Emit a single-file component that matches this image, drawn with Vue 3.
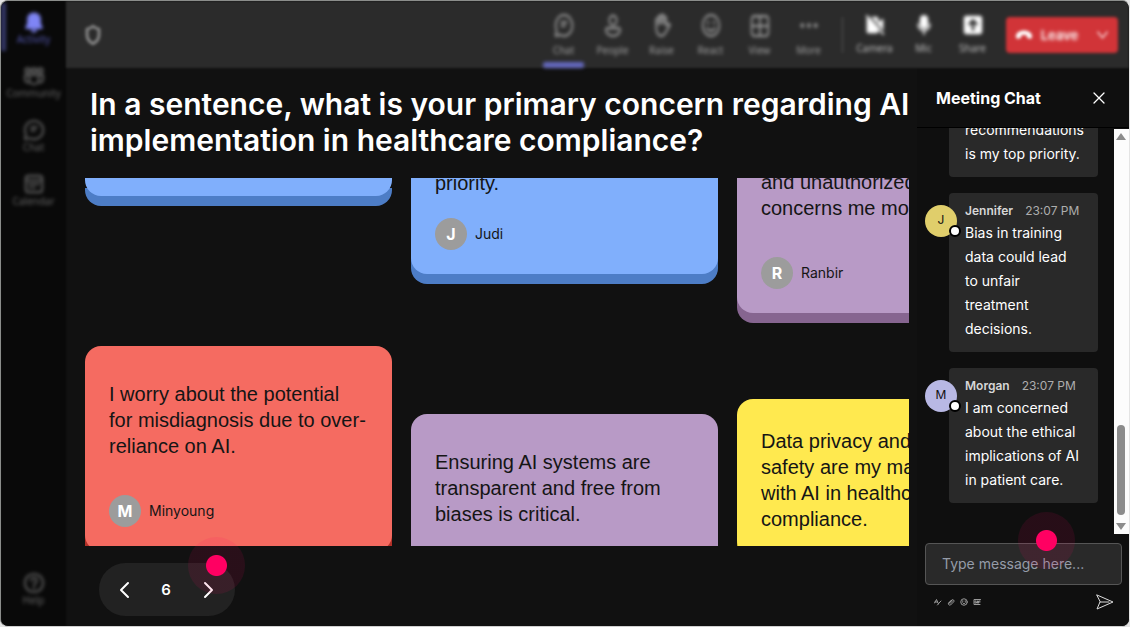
<script setup>
const nav = [
  { label: 'Activity', icon: 'bell', active: true },
  { label: 'Community', icon: 'community' },
  { label: 'Chat', icon: 'chat' },
  { label: 'Calendar', icon: 'calendar' },
]

const tools = [
  { label: 'Chat', icon: 'chat', active: true },
  { label: 'People', icon: 'person' },
  { label: 'Raise', icon: 'hand' },
  { label: 'React', icon: 'smile' },
  { label: 'View', icon: 'grid' },
  { label: 'More', icon: 'more' },
]

const devices = [
  { label: 'Camera', icon: 'camera' },
  { label: 'Mic', icon: 'mic' },
  { label: 'Share', icon: 'share' },
]

const columns = [
  {
    name: 'first',
    cards: [
      { tone: 'blue', size: 'tail' },
      {
        tone: 'red',
        lines: ['I worry about the potential', 'for misdiagnosis due to over-', 'reliance on AI.'],
        author: 'Minyoung',
      },
    ],
  },
  {
    name: 'second',
    cards: [
      { tone: 'blue', size: 'short', lines: ['priority.'], author: 'Judi' },
      {
        tone: 'purple',
        size: 'open',
        lines: ['Ensuring AI systems are', 'transparent and free from', 'biases is critical.'],
      },
    ],
  },
  {
    name: 'third',
    cards: [
      { tone: 'purple', size: 'cut', lines: ['and unauthorized', 'concerns me most.'], author: 'Ranbir' },
      {
        tone: 'yellow',
        size: 'long',
        lines: ['Data privacy and', 'safety are my main', 'with AI in healthcare', 'compliance.'],
      },
    ],
  },
]

const messages = [
  { lines: ['recommendations', 'is my top priority.'] },
  {
    author: 'Jennifer',
    time: '23:07 PM',
    tone: 'sand',
    lines: ['Bias in training', 'data could lead', 'to unfair', 'treatment', 'decisions.'],
  },
  {
    author: 'Morgan',
    time: '23:07 PM',
    tone: 'lilac',
    lines: ['I am concerned', 'about the ethical', 'implications of AI', 'in patient care.'],
  },
]

const icons = {
  bell: '<path fill="currentColor" stroke="none" d="M12 1.5c-4.600 0-7.500 3.400-7.500 7.600v4.400L2.500 18c-.3.800.2 1.500 1 1.500h17c.8 0 1.300-.7 1-1.500l-2-4.500V9.100c0-4.200-2.900-7.600-7.500-7.600zM8.500 20.500a3.500 3 0 0 0 7 0z"/>',
  community: '<circle cx="5" cy="6" r="2.500"/><circle cx="12" cy="6" r="2.500"/><circle cx="19" cy="6" r="2.500"/><path d="M7 11h10v5a5 5 0 0 1-10 0zM7 11H2v4a4 4 0 0 0 5 4M17 11h5v4a4 4 0 0 1-5 4"/>',
  chat: '<path d="M12 2a10 10 0 1 1-4.700 18.800L2 22l1.200-5.300A10 10 0 0 1 12 2z"/><path d="M9 9h6M9 12.500h4"/>',
  calendar: '<rect x="3" y="3" width="18" height="18" rx="3"/><path d="M3 8h18M7 12h2M11 12h2M15 12h2M7 16h2M11 16h2"/>',
  help: '<circle cx="12" cy="12" r="10"/><path d="M9 9.500a3 3 0 1 1 4.500 2.600c-1 .6-1.500 1.200-1.500 2.200M12 16.500v1.500"/>',
  shield: '<path stroke-width="3" d="M12 2.500c2.500 2 4.500 2.800 6.500 3V12c0 4.500-2.500 7.500-6.500 9.500C8 19.500 5.500 16.500 5.500 12V5.500c2-.2 4-1 6.500-3z"/>',
  person: '<circle cx="12" cy="7" r="4.500"/><path d="M5 14.500h14a1.500 1.500 0 0 1 1.500 1.500c0 3.500-4 6-8.500 6s-8.500-2.500-8.500-6A1.500 1.500 0 0 1 5 14.500z"/>',
  hand: '<path d="M5 13V6.500a1.500 1.500 0 0 1 3 0V4a1.500 1.500 0 0 1 3 0V3a1.500 1.500 0 0 1 3 0v2a1.500 1.500 0 0 1 3 0v7l2.500-1.500c1.500-.5 2.500.8 1.500 2L16 19c-1.200 2-2.800 3-5 3-4 0-6-3-6-9zM8 6v5M11 4v6M14 4v6"/>',
  smile: '<circle cx="12" cy="12" r="10"/><path d="M7.500 14.500c2 3.500 7 3.500 9 0M8.500 8.500v1.500M15.500 8.500v1.500"/>',
  grid: '<rect x="2" y="3" width="20" height="19" rx="3"/><path d="M12 3v19M2 12.500h20"/>',
  more: '<g fill="currentColor" stroke="none"><circle cx="4" cy="12" r="2.200"/><circle cx="12" cy="12" r="2.200"/><circle cx="20" cy="12" r="2.200"/></g>',
  camera: '<path fill="currentColor" stroke="none" d="M4 3h10a2 2 0 0 1 2 2v4l6-4v15l-6-4v3a2 2 0 0 1-2 2H4a2 2 0 0 1-2-2V5a2 2 0 0 1 2-2z"/><path stroke="#2b2b2b" d="M4 1l19 20"/><path d="M2 2l20 20"/>',
  mic: '<rect x="7" y="1" width="10" height="15" rx="5" fill="currentColor" stroke="none"/><path d="M5 11a7 7 0 0 0 14 0M12 18v4"/>',
  share: '<rect x="1" y="2" width="22" height="20" rx="3" fill="currentColor" stroke="none"/><path stroke="#2b2b2b" stroke-width="3" d="M12 17V8M8 11l4-4 4 4"/>',
}
</script>

<template>
  <div class="frame">
    <nav class="rail" aria-label="Apps">
      <div class="rail-items">
        <button v-for="item in nav" :key="item.label" type="button" class="rail-item" :class="{ active: item.active }">
          <svg class="icon" viewBox="0 0 24 24" v-html="icons[item.icon]"></svg>
          <span>{{ item.label }}</span>
        </button>
        <button type="button" class="rail-item help">
          <svg class="icon" viewBox="0 0 24 24" v-html="icons.help"></svg>
          <span>Help</span>
        </button>
      </div>
    </nav>

    <div class="stage">
      <header class="topbar">
        <div class="topbar-inner">
          <svg class="icon shield" viewBox="0 0 24 24" v-html="icons.shield"></svg>
          <div class="tools">
            <button v-for="tool in tools" :key="tool.label" type="button" class="tool" :class="{ current: tool.active }">
              <svg class="icon tall" viewBox="0 0 24 24" preserveAspectRatio="none" v-html="icons[tool.icon]"></svg>
              <span>{{ tool.label }}</span>
            </button>
          </div>
          <span class="divider"></span>
          <div class="tools devices">
            <button v-for="tool in devices" :key="tool.label" type="button" class="tool bright">
              <svg class="icon tall" viewBox="0 0 24 24" preserveAspectRatio="none" v-html="icons[tool.icon]"></svg>
              <span>{{ tool.label }}</span>
            </button>
          </div>
          <button type="button" class="leave">
            <svg class="phone" viewBox="0 0 20 12">
              <path fill="#fff" d="M10 1C5 1 1 3.500 1 7.500c0 2 .8 3 2.200 2.700l2.500-.6c.8-.2 1.200-.8 1.200-1.600l.1-1.500c2-.6 4-.6 6 0l.1 1.500c0 .8.400 1.400 1.200 1.600l2.500.6C18.200 10.500 19 9.500 19 7.500 19 3.500 15 1 10 1z" />
            </svg>
            <span>Leave</span>
            <svg class="caret" viewBox="0 0 14 10"><path d="M2 2l5 6 5-6" /></svg>
          </button>
        </div>
      </header>

      <div class="body">
        <main class="poll">
          <h1>In a sentence, what is your primary concern regarding AI implementation in healthcare compliance?</h1>

          <section class="board" aria-label="Responses">
            <div v-for="column in columns" :key="column.name" class="column" :class="column.name">
              <article v-for="(card, i) in column.cards" :key="i" class="card" :class="[card.tone, card.size]">
                <p v-if="card.lines">
                  <span v-for="line in card.lines" :key="line">{{ line }}</span>
                </p>
                <footer v-if="card.author">
                  <span class="initial">{{ card.author[0] }}</span>
                  <span class="author">{{ card.author }}</span>
                </footer>
              </article>
            </div>
          </section>

          <div class="pager">
            <button type="button" aria-label="Previous">
              <svg viewBox="0 0 12 18"><path d="M10 2L3 9l7 7" /></svg>
            </button>
            <span class="page">6</span>
            <button type="button" aria-label="Next">
              <svg viewBox="0 0 12 18"><path d="M2 2l7 7-7 7" /></svg>
            </button>
            <span class="hotspot on-pager"></span>
          </div>
        </main>

        <aside class="chat">
          <header class="chat-head">
            <h2>Meeting Chat</h2>
            <button type="button" aria-label="Close">
              <svg viewBox="0 0 14 14"><path d="M2 2l10 10M12 2L2 12" /></svg>
            </button>
          </header>

          <div class="chat-scroll">
            <div class="messages">
              <article v-for="(message, i) in messages" :key="i" class="message">
                <template v-if="message.author">
                  <span class="avatar" :class="message.tone">{{ message.author[0] }}<i></i></span>
                  <div class="meta">
                    <strong>{{ message.author }}</strong>
                    <time>{{ message.time }}</time>
                  </div>
                </template>
                <p>
                  <span v-for="line in message.lines" :key="line">{{ line }}</span>
                </p>
              </article>
            </div>
            <div class="scrollbar">
              <svg viewBox="0 0 10 8"><path d="M5 0l5 7H0z" /></svg>
              <span class="track"><span class="thumb"></span></span>
              <svg viewBox="0 0 10 8"><path d="M5 8L0 1h10z" /></svg>
            </div>
          </div>

          <form class="composer" @submit.prevent>
            <div class="field">
              <input type="text" placeholder="Type message here..." aria-label="Message" />
              <span class="hotspot on-field"></span>
            </div>
            <div class="actions">
              <button type="button" aria-label="Format">
                <svg viewBox="0 0 16 16"><path d="M1 10l4-7 3 7M2 8h5M8 12l6-6M7 14l2-2" /></svg>
              </button>
              <button type="button" aria-label="Attach">
                <svg viewBox="0 0 16 16"><path d="M4 10l6-6a2.500 2.500 0 0 1 3.500 3.500L7 14a3 3 0 0 1-4-4l6-6M6 11l5-5" /></svg>
              </button>
              <button type="button" aria-label="Emoji">
                <svg viewBox="0 0 16 16"><circle cx="8" cy="8" r="6.500" /><path d="M5 9.500c1.500 2.500 4.500 2.500 6 0M5.500 5.500v1.500M10.500 5.500v1.500" /></svg>
              </button>
              <button type="button" aria-label="GIF">
                <svg viewBox="0 0 16 16"><path d="M15 3H2v10h12M6 6H4v4h3V8M9 6v4M11 10V6h3M11 8h3" /></svg>
              </button>
              <button type="submit" class="send" aria-label="Send">
                <svg viewBox="0 0 18 18"><path d="M1 2l16 7L1 16l3-7zM4 9h9" /></svg>
              </button>
            </div>
          </form>
        </aside>
      </div>
    </div>
  </div>
</template>

<style>
body {
  background: #e4e4e4;
}
</style>

<style scoped>
* {
  box-sizing: border-box;
}
h1,
h2,
p {
  margin: 0;
}
button {
  display: flex;
  align-items: center;
  justify-content: center;
  padding: 0;
  border: 0;
  background: none;
  color: inherit;
  font: inherit;
}
svg {
  display: block;
  fill: none;
  stroke: currentColor;
  stroke-width: 2;
  stroke-linecap: round;
  stroke-linejoin: round;
}
p span {
  display: block;
}
.frame {
  display: flex;
  height: 100vh;
  border: 1px solid;
  border-color: #8b8d8b #e4e4e4 #d0d0d0 #8b8d8b;
  border-radius: 8px;
  overflow: hidden;
  background: #111;
  color: #fff;
  font-family: Inter, "Liberation Sans", sans-serif;
}
/* The app chrome sits out of focus behind the poll and the chat. */
.rail,
.topbar {
  filter: blur(1px);
}
.rail-items,
.topbar-inner {
  filter: blur(1px);
}
.rail-item,
.tool,
.leave span {
  filter: blur(1px);
}
.rail {
  flex: 0 0 65px;
  background: #090909;
  font-family: "Noto Sans", sans-serif;
}
.rail-items {
  display: flex;
  flex-direction: column;
  height: 100%;
  padding-bottom: 17px;
}
.rail-item {
  position: relative;
  flex-direction: column;
  height: 54px;
  color: #666;
  font-size: 10px;
  line-height: 12px;
}
.rail-item.active {
  color: #7f85f5;
}
.rail-item.active::before {
  content: "";
  position: absolute;
  top: 2px;
  left: 0;
  width: 5px;
  height: 48px;
  background: #36396b;
}
.rail-item.active span {
  color: #5458b0;
}
.help {
  margin-top: auto;
  height: 40px;
}
.icon {
  width: 22px;
  height: 22px;
}
.stage {
  display: flex;
  flex: 1;
  flex-direction: column;
  min-width: 0;
}
.topbar {
  flex: 0 0 67px;
  background: #2b2b2b;
}
.topbar-inner {
  display: flex;
  align-items: center;
  height: 100%;
  padding: 0 11px 0 16px;
}
.shield {
  color: #909090;
}
.tools {
  display: flex;
  margin-left: auto;
}
.tool {
  position: relative;
  flex-direction: column;
  gap: 5px;
  width: 49px;
  height: 67px;
  color: #a0a0a0;
  font-family: "Noto Sans", sans-serif;
  font-size: 10px;
  line-height: 14px;
}
.tall {
  width: 20px;
  height: 25px;
}
.tool.current::after {
  content: "";
  position: absolute;
  left: 4px;
  right: 4px;
  bottom: 0;
  height: 6px;
  border-radius: 2px;
  background: #6569c0;
}
.tool.bright {
  color: #fff;
}
.tool.bright span {
  color: #c0c0c0;
}
.tool.bright .icon {
  height: 22px;
}
.divider {
  width: 1px;
  height: 36px;
  margin: 0 7px 0 9px;
  background: #555;
}
.devices {
  margin: 0 9px 0 0;
}
.leave {
  gap: 8px;
  width: 112px;
  height: 36px;
  border-radius: 4px;
  background: #d13438;
  color: #fff;
  font-size: 13px;
  font-weight: 600;
}
.phone {
  width: 18px;
  height: 12px;
  stroke: none;
}
.caret {
  width: 13px;
  height: 10px;
  margin-left: 10px;
  color: #f0b4b6;
}
.body {
  display: flex;
  flex: 1;
  min-height: 0;
}
.poll {
  display: flex;
  flex: 1;
  flex-direction: column;
  min-width: 0;
  padding: 18px 0 10px 18px;
}
h1 {
  padding-left: 6px;
  font-size: 30px;
  font-weight: 600;
  line-height: 36px;
}
.board {
  display: flex;
  flex: 1;
  gap: 19px;
  min-height: 0;
  margin: 20px 8px 0 1px;
  overflow: hidden;
}
.column {
  display: flex;
  flex: 0 0 307px;
  flex-direction: column;
}
.first {
  gap: 150px;
}
.second {
  gap: 140px;
}
.third {
  gap: 86px;
}
.card {
  flex: none;
  padding: 35px 24px 24px;
  border-radius: 16px;
  color: #151515;
}
.card p {
  font-family: "Liberation Sans", Arial, sans-serif;
  font-size: 20px;
  line-height: 26px;
  white-space: nowrap;
}
.card footer {
  display: flex;
  align-items: center;
  gap: 8px;
  margin-top: 36px;
  font-size: 14px;
}
.author {
  padding-bottom: 2px;
}
.card.tail,
.card.short,
.card.cut {
  padding-top: 0;
  border-radius: 0 0 16px 16px;
}
.card.tail {
  height: 18px;
  padding: 0;
}
.card.short {
  margin-top: -8px;
}
.card.short footer {
  margin-top: 22px;
}
.card.cut {
  margin-top: -9px;
}
.card.open {
  padding-bottom: 48px;
}
.card.long {
  padding-top: 29px;
}
.initial {
  display: grid;
  place-items: center;
  width: 32px;
  height: 32px;
  border-radius: 50%;
  background: #9c9c9c;
  color: #fff;
  font-size: 16px;
  font-weight: 700;
}
.blue {
  background: #80affc;
  box-shadow: 0 10px 0 #4d7dc6;
}
.red {
  background: #f56b61;
  box-shadow: 0 10px 0 #b03028;
}
.purple {
  background: #b89ac6;
  box-shadow: 0 10px 0 #866590;
}
.yellow {
  background: #ffe94f;
  box-shadow: 0 10px 0 #c4ae20;
}
.pager {
  position: relative;
  display: flex;
  align-items: center;
  align-self: flex-start;
  gap: 24px;
  height: 53px;
  margin: 17px 0 0 15px;
  padding: 0 18px 0 16px;
  border-radius: 27px;
  background: #222;
}
.pager button {
  width: 17px;
  height: 32px;
}
.pager svg {
  width: 12px;
  height: 18px;
}
.page {
  width: 20px;
  font-size: 15px;
  font-weight: 600;
  text-align: center;
}
.hotspot {
  position: absolute;
  width: 57px;
  height: 57px;
  border-radius: 50%;
  background: radial-gradient(circle, #ff0062 10px, rgba(255, 0, 98, 0.1) 11px);
  pointer-events: none;
}
.on-pager {
  top: -26px;
  right: -10px;
}
.on-field {
  top: -31px;
  left: 93px;
}
.chat {
  display: flex;
  flex: 0 0 212px;
  flex-direction: column;
  min-width: 0;
  background: #0f0f0f;
}
.chat-head {
  display: flex;
  flex: 0 0 60px;
  align-items: center;
  justify-content: space-between;
  padding: 0 23px 0 19px;
  border-bottom: 1px solid #000;
}
h2 {
  font-size: 16px;
  font-weight: 700;
  line-height: 20px;
}
.chat-head svg {
  width: 14px;
  height: 14px;
  stroke-width: 1.3;
}
.chat-scroll {
  display: flex;
  flex: 1;
  min-height: 0;
}
.messages {
  display: flex;
  flex: 1;
  flex-direction: column;
  justify-content: flex-end;
  gap: 16px;
  min-width: 0;
  padding: 0 16px 31px 32px;
  overflow: hidden;
}
.message {
  position: relative;
  flex: none;
  padding: 8px 16px 11px;
  border-radius: 4px;
  background: #292929;
  font-size: 14px;
  line-height: 24px;
  white-space: nowrap;
}
.meta {
  display: flex;
  gap: 12px;
  font-size: 12px;
  line-height: 20px;
  color: #adadad;
}
.meta strong {
  color: #d6d6d6;
  font-weight: 600;
}
.avatar {
  position: absolute;
  top: 12px;
  left: -24px;
  width: 32px;
  height: 32px;
  border-radius: 50%;
  color: #111;
  font-size: 12px;
  line-height: 30px;
  text-align: center;
}
.avatar i {
  position: absolute;
  right: -4px;
  bottom: 0;
  width: 12px;
  height: 12px;
  border: 2px solid #000;
  border-radius: 50%;
  background: #fff;
}
.sand {
  background: #e0ce6b;
}
.lilac {
  background: #b8b8e4;
}
.scrollbar {
  display: flex;
  flex: 0 0 15px;
  flex-direction: column;
  align-items: center;
  justify-content: space-between;
  margin-top: 1px;
  padding: 4px 1px 4px 0;
  background: #fcfcfc;
}
.scrollbar svg {
  width: 10px;
  height: 8px;
  fill: #8b8b8b;
  stroke: none;
}
.track {
  display: flex;
  flex: 1;
  align-items: flex-end;
  padding-bottom: 7px;
}
.thumb {
  width: 8px;
  height: 90px;
  border-radius: 4px;
  background: #8b8b8b;
}
.composer {
  flex: 0 0 92px;
  padding: 9px 7px 0 8px;
}
.field {
  position: relative;
}
input {
  display: block;
  width: 100%;
  height: 42px;
  padding: 0 16px 2px;
  border: 1px solid #555;
  border-radius: 4px;
  background: #292929;
  color: #fff;
  font: 14px Inter, "Liberation Sans", sans-serif;
}
input::placeholder {
  color: #959ca8;
  opacity: 1;
}
.actions {
  display: flex;
  align-items: center;
  gap: 5px;
  padding: 8px 8px 0 9px;
  color: #999;
}
.actions svg {
  width: 8px;
  height: 8px;
}
.actions .send {
  margin-left: auto;
  color: #ddd;
}
.send svg {
  width: 18px;
  height: 18px;
  stroke-width: 1;
}
</style>
